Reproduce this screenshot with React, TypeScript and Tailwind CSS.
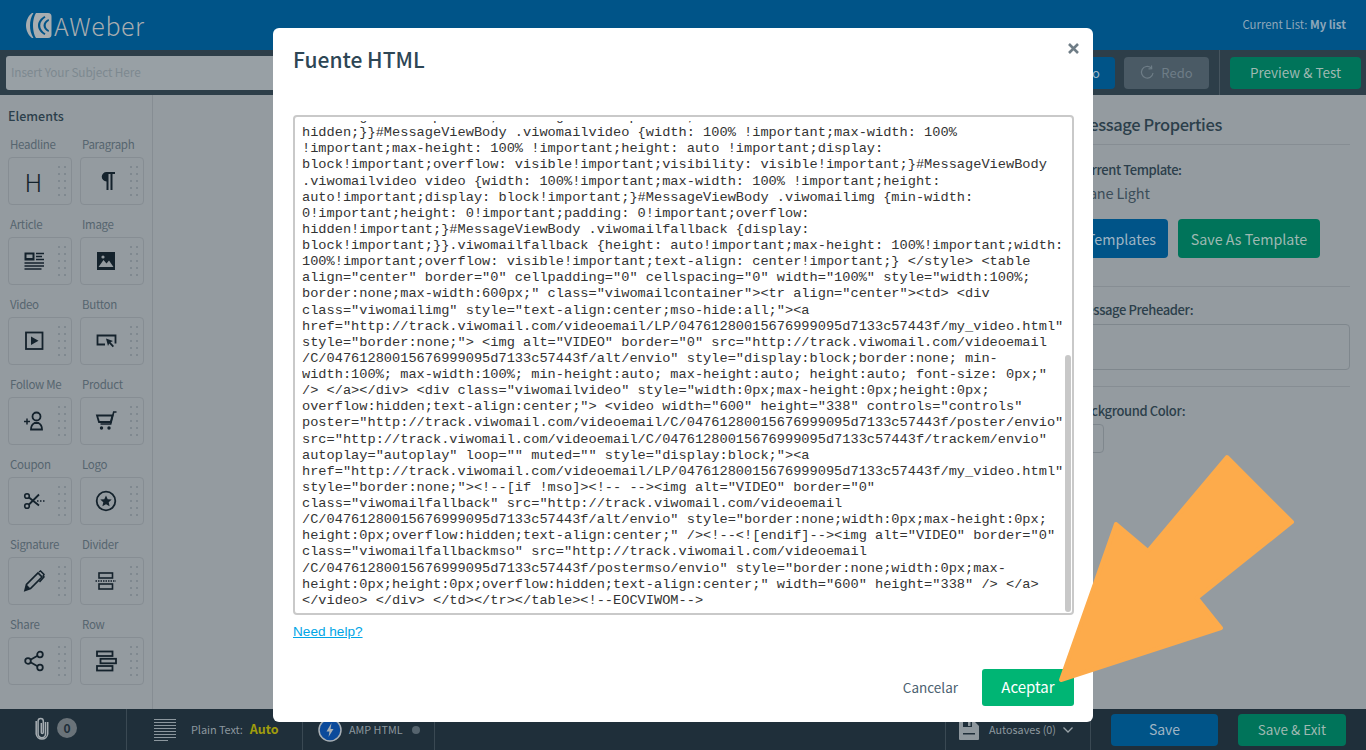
import React from 'react'

const ui = '"Noto Sans CJK SC", "Source Sans Pro", "Noto Sans", sans-serif'

const sourceLines = [
  'min-height: 0!important;max-height: 0!important;overflow:',
  'hidden;}}#MessageViewBody .viwomailvideo {width: 100% !important;max-width: 100%',
  '!important;max-height: 100% !important;height: auto !important;display:',
  'block!important;overflow: visible!important;visibility: visible!important;}#MessageViewBody',
  '.viwomailvideo video {width: 100%!important;max-width: 100% !important;height:',
  'auto!important;display: block!important;}#MessageViewBody .viwomailimg {min-width:',
  '0!important;height: 0!important;padding: 0!important;overflow:',
  'hidden!important;}#MessageViewBody .viwomailfallback {display:',
  'block!important;}}.viwomailfallback {height: auto!important;max-height: 100%!important;width:',
  '100%!important;overflow: visible!important;text-align: center!important;} </style> <table',
  'align="center" border="0" cellpadding="0" cellspacing="0" width="100%" style="width:100%;',
  'border:none;max-width:600px;" class="viwomailcontainer"><tr align="center"><td> <div',
  'class="viwomailimg" style="text-align:center;mso-hide:all;"><a',
  'href="http://track.viwomail.com/videoemail/LP/04761280015676999095d7133c57443f/my_video.html"',
  'style="border:none;"> <img alt="VIDEO" border="0" src="http://track.viwomail.com/videoemail',
  '/C/04761280015676999095d7133c57443f/alt/envio" style="display:block;border:none; min-',
  'width:100%; max-width:100%; min-height:auto; max-height:auto; height:auto; font-size: 0px;"',
  '/> </a></div> <div class="viwomailvideo" style="width:0px;max-height:0px;height:0px;',
  'overflow:hidden;text-align:center;"> <video width="600" height="338" controls="controls"',
  'poster="http://track.viwomail.com/videoemail/C/04761280015676999095d7133c57443f/poster/envio"',
  'src="http://track.viwomail.com/videoemail/C/04761280015676999095d7133c57443f/trackem/envio"',
  'autoplay="autoplay" loop="" muted="" style="display:block;"><a',
  'href="http://track.viwomail.com/videoemail/LP/04761280015676999095d7133c57443f/my_video.html"',
  'style="border:none;"><!--[if !mso]><!-- --><img alt="VIDEO" border="0"',
  'class="viwomailfallback" src="http://track.viwomail.com/videoemail',
  '/C/04761280015676999095d7133c57443f/alt/envio" style="border:none;width:0px;max-height:0px;',
  'height:0px;overflow:hidden;text-align:center;" /><!--<![endif]--><img alt="VIDEO" border="0"',
  'class="viwomailfallbackmso" src="http://track.viwomail.com/videoemail',
  '/C/04761280015676999095d7133c57443f/postermso/envio" style="border:none;width:0px;max-',
  'height:0px;height:0px;overflow:hidden;text-align:center;" width="600" height="338" /> </a>',
  '</video> </div> </td></tr></table><!--EOCVIWOM-->',
]

const Icon = ({ children }: { children: React.ReactNode }) => (
  <svg width="24" height="24" viewBox="0 0 24 24" fill="none" stroke="#14222c" strokeWidth="1.6">
    {children}
  </svg>
)

const elements: { label: string; icon: React.ReactNode }[] = [
  { label: 'Headline', icon: <span className="text-[25px] leading-none font-light text-[#14222c]">H</span> },
  {
    label: 'Paragraph',
    icon: (
      <Icon>
        <path d="M10 3h11v2h-2.500v16h-2V5h-2v16h-2v-8.500a4.750 4.750 0 0 1 0-9.500z" fill="#14222c" stroke="none" />
      </Icon>
    ),
  },
  {
    label: 'Article',
    icon: (
      <Icon>
        <rect x="2.5" y="3.5" width="10" height="8" fill="#14222c" stroke="none" />
        <rect x="4.5" y="5.5" width="6" height="3.5" fill="#949ba0" stroke="none" />
        <path d="M14 4.500h8M14 7.500h6M14 10.500h8M2.500 14h19.500M2.500 17h19.500M2.500 20h17" strokeWidth="1.400" />
      </Icon>
    ),
  },
  {
    label: 'Image',
    icon: (
      <Icon>
        <rect x="3" y="3" width="18" height="18" fill="#14222c" stroke="none" />
        <circle cx="9" cy="8" r="1.600" fill="#949ba0" stroke="none" />
        <path d="M4.500 18 9.500 11l3 3.500 2.500-3 4.500 6.500z" fill="#949ba0" stroke="none" />
      </Icon>
    ),
  },
  {
    label: 'Video',
    icon: (
      <Icon>
        <rect x="4" y="3.500" width="16.500" height="16.500" strokeWidth="1.800" />
        <path d="M9 7.500l7.500 4.200L9 16z" fill="#14222c" stroke="none" />
      </Icon>
    ),
  },
  {
    label: 'Button',
    icon: (
      <Icon>
        <path d="M11 15.500H3.500v-9h18v8" strokeWidth="1.800" />
        <path d="M12 9.500l7 2.500-2.500 1.300 3.500 3.700-1.300 1.200-3.500-3.700-1.200 2.500z" fill="#14222c" stroke="none" />
      </Icon>
    ),
  },
  {
    label: 'Follow Me',
    icon: (
      <Icon>
        <circle cx="14.500" cy="7.500" r="4" strokeWidth="1.800" />
        <path d="M9 20.500c0-2.500.5-5 3.500-6.500h4c3 1.500 3.500 4 3.500 6.500z" strokeWidth="1.800" />
        <path d="M2 12.500h6M5 9.500v6" strokeWidth="1.500" />
      </Icon>
    ),
  },
  {
    label: 'Product',
    icon: (
      <Icon>
        <path d="M22.500 3h-2.800l-3 12H6.500" strokeWidth="1.600" />
        <path d="M3 6.500h15.500l-1.800 6.500H5z" strokeWidth="1.800" />
        <circle cx="7.500" cy="19" r="1.700" fill="#14222c" stroke="none" />
        <circle cx="15" cy="19" r="1.700" fill="#14222c" stroke="none" />
      </Icon>
    ),
  },
  {
    label: 'Coupon',
    icon: (
      <Icon>
        <circle cx="5" cy="7" r="2.300" strokeWidth="1.600" />
        <circle cx="5" cy="17" r="2.300" strokeWidth="1.600" />
        <path d="M7 8.500L17 16.500M7 15.500L17 5.500" strokeWidth="1.800" />
        <path d="M15 12h8" strokeWidth="1.500" strokeDasharray="1.500 1.500" />
      </Icon>
    ),
  },
  {
    label: 'Logo',
    icon: (
      <Icon>
        <circle cx="12" cy="12" r="9.300" strokeWidth="1.800" />
        <path d="M12 6.500l1.700 3.700 4 .4-3 2.700.9 4-3.600-2.100-3.600 2.100.9-4-3-2.700 4-.4z" fill="#14222c" stroke="none" />
      </Icon>
    ),
  },
  {
    label: 'Signature',
    icon: (
      <Icon>
        <path d="M3 21.500l1.500-6L16 4l4 4L8.500 19.500z" strokeWidth="1.700" />
        <path d="M3 21.500l1.500-6 4 4z" fill="#14222c" stroke="none" />
        <path d="M17 3l1.500-1 3.500 3.500-1 2M21 6l1 2-4.500 5" strokeWidth="1.500" />
      </Icon>
    ),
  },
  {
    label: 'Divider',
    icon: (
      <Icon>
        <rect x="5" y="4" width="13.500" height="5" strokeWidth="1.600" />
        <rect x="5" y="15" width="13.500" height="5" strokeWidth="1.600" />
        <path d="M1.500 12h20.500" strokeWidth="1.400" strokeDasharray="1.500 1" />
      </Icon>
    ),
  },
  {
    label: 'Share',
    icon: (
      <Icon>
        <circle cx="6" cy="12" r="2.800" strokeWidth="1.800" />
        <circle cx="18" cy="5.500" r="2.800" strokeWidth="1.800" />
        <circle cx="18" cy="18.500" r="2.800" strokeWidth="1.800" />
        <path d="M8.500 10.700l7-3.900M8.500 13.300l7 3.900" strokeWidth="1.800" />
      </Icon>
    ),
  },
  {
    label: 'Row',
    icon: (
      <Icon>
        <rect x="3" y="2.500" width="15.500" height="4.500" strokeWidth="1.800" />
        <rect x="6.500" y="9.800" width="15.500" height="4.500" strokeWidth="1.800" />
        <rect x="3" y="17" width="15.500" height="4.500" strokeWidth="1.800" />
      </Icon>
    ),
  },
]

const Grip = () => (
  <div className="grid grid-cols-2 gap-x-[4px] gap-y-[5px]">
    {Array.from({ length: 10 }).map((_, i) => (
      <span key={i} className="w-[2px] h-[2px] bg-[#7f888f]" />
    ))}
  </div>
)

const Sidebar = () => (
  <aside className="w-[153px] shrink-0 border-r border-[#868d93] px-2 pt-[11px]">
    <h3 className="text-[12.500px] leading-5 font-medium text-[#2c3f4b]">Elements</h3>
    <div className="grid grid-cols-[64px_64px] gap-x-2 gap-y-[11px] mt-[10px]">
      {elements.map((el) => (
        <div key={el.label}>
          <div className="text-[11.500px] tracking-[-0.3px] leading-4 pl-[2px] mb-[5px] text-[#56656f]">{el.label}</div>
          <div className="h-12 rounded-[4px] border border-[#868d93] flex items-center">
            <div className="w-[49px] flex justify-center items-center">{el.icon}</div>
            <Grip />
          </div>
        </div>
      ))}
    </div>
  </aside>
)

const PropertiesPanel = () => (
  <section className="w-[306px] shrink-0 px-4 text-[#2c3f4b]">
    <h2 className="text-[16.500px] tracking-[-0.4px] leading-6 font-medium mt-[17px] whitespace-nowrap">Message Properties</h2>
    <div className="border-t border-[#868d93] mt-[8px]" />
    <div className="text-[13px] tracking-[-0.4px] leading-5 font-medium mt-[15px]">Current Template:</div>
    <div className="text-[14.500px] tracking-[-0.2px] leading-6 mt-[1px] text-[#3b4d59]">Plane Light</div>
    <div className="flex gap-[10px] mt-[14px]">
      <button className="w-[92px] h-[39px] rounded-[4px] bg-[#005488] text-[14.300px] text-right pr-3 text-[#9fb4c4] overflow-hidden whitespace-nowrap">
        Templates
      </button>
      <button className="w-[142px] h-[39px] rounded-[4px] bg-[#00745a] text-[14.300px] text-[#9fb9b2]">Save As Template</button>
    </div>
    <div className="border-t border-[#868d93] mt-[28px]" />
    <div className="text-[13px] tracking-[-0.4px] leading-5 font-medium mt-[13px]">Message Preheader:</div>
    <div className="h-[46px] rounded-[4px] border border-[#7f878d] mt-[4px]" />
    <div className="border-t border-[#868d93] mt-[16px]" />
    <div className="text-[13px] tracking-[-0.4px] leading-5 font-medium mt-[14px]">Background Color:</div>
    <div className="w-[28px] h-[29px] rounded-[4px] border border-[#7f878d] mt-[3px]" />
  </section>
)

const FooterBar = () => (
  <footer className="h-[41px] shrink-0 bg-[#1f2f3a] flex items-stretch text-[#8c979e]">
    <div className="w-[127px] border-r border-[#3a4953] flex items-center pl-[35px] pb-[3px] gap-2">
      <svg width="14" height="24" viewBox="0 0 14 24" fill="none" stroke="#a6adb2" strokeWidth="1.500">
        <path d="M10.500 6v12a3.700 3.700 0 0 1-7.400 0V5a2.600 2.600 0 0 1 5.200 0v11.500a1 1 0 0 1-2 0V7" />
        <path d="M12.700 6v12a5.800 5.800 0 0 1-11.500 0V5" />
      </svg>
      <span className="w-5 h-5 rounded-full bg-[#6a7379] text-[12px] font-bold text-[#1f2f3a] flex items-center justify-center">0</span>
    </div>
    <div className="w-[176px] border-r border-[#3a4953] flex items-center pl-[27px]">
      <svg width="22" height="22" viewBox="0 0 22 22" stroke="#8c979e" strokeWidth="1">
        <path d="M0 .5h22M0 3.500h22M0 6.500h22M0 9.500h22M0 12.500h22M0 15.500h22M0 18.500h22M0 21.500h14" />
      </svg>
      <span className="ml-[15px] text-[11px] tracking-[-0.1px]">Plain Text:</span>
      <span className="ml-[7px] text-[12.500px] font-bold text-[#a09c0c]">Auto</span>
    </div>
    <div className="w-[132px] border-r border-[#3a4953] flex items-center pl-[15px]">
      <svg width="24" height="24" viewBox="0 0 24 24">
        <circle cx="12" cy="12" r="11" fill="#0b4a9b" stroke="#a9b0b5" strokeWidth="1.500" />
        <path d="M13.500 5l-5 8.500h3L10.500 19l5-8h-3z" fill="#a9b0b5" />
      </svg>
      <span className="ml-[7px] text-[10.800px] whitespace-nowrap">AMP HTML</span>
      <span className="ml-[9px] w-2 h-2 rounded-full bg-[#56646e]" />
    </div>
    <div className="flex-1 border-r border-[#3a4953]" />
    <div className="w-[145px] border-r border-[#3a4953] flex items-center pl-[13px]">
      <svg width="20" height="20" viewBox="0 0 20 20">
        <path d="M0 2a1 1 0 0 1 1-1h14l5 5v13a1 1 0 0 1-1 1H1a1 1 0 0 1-1-1z" fill="#8e979d" />
        <rect x="4" y="1" width="9" height="6" fill="#1f2f3a" />
        <rect x="9" y="2" width="2.500" height="4" fill="#8e979d" />
        <rect x="4" y="13" width="12" height="1.500" fill="#1f2f3a" />
      </svg>
      <span className="ml-[10px] text-[10.800px] whitespace-nowrap">Autosaves (0)</span>
      <svg className="ml-[7px]" width="10" height="6" viewBox="0 0 10 6" fill="none" stroke="#9aa3a8" strokeWidth="1.300">
        <path d="M.5.500 5 5 9.500.500" />
      </svg>
    </div>
    <div className="flex items-center pl-[20px] pr-[20px] gap-5">
      <button className="w-[107px] h-8 rounded-[4px] bg-[#005488] text-[14px] text-[#9fb4c4]">Save</button>
      <button className="w-[108px] h-8 rounded-[4px] bg-[#00745a] text-[13.500px] text-[#9fb9b2]">Save & Exit</button>
    </div>
  </footer>
)

const SourceModal = () => (
  <div className="absolute inset-0 flex justify-center items-start pt-[28px]">
    <div className="w-[820px] h-[694px] bg-white rounded-[6px] pl-5 pr-[19px] flex flex-col">
      <div className="flex justify-between items-start">
        <h1 className="text-[21px] leading-8 font-medium text-[#2d4655] mt-[15px]">Fuente HTML</h1>
        <svg className="mt-[15px] -mr-[5px]" width="11" height="11" viewBox="0 0 11 11" stroke="#6f7d86" strokeWidth="2.600">
          <path d="M1 1l9 9M10 1l-9 9" />
        </svg>
      </div>
      <div className="relative mt-[40px] h-[500px] border-2 border-[#c9c9c9] rounded-[4px] pt-[4px] pb-[3px] pl-[7px]">
        <div className="h-full overflow-hidden font-['Liberation_Mono',monospace] text-[13.65px] leading-[16.13px] text-[#333] whitespace-pre">
          <div className="-mt-[12px]">
            {sourceLines.map((line, i) => (
              <div key={i}>{line}</div>
            ))}
          </div>
        </div>
        <div className="absolute right-[1px] top-[238px] bottom-[1px] w-[6px] rounded-full bg-[#c8c8c8]" />
      </div>
      <a href="#" className="mt-[7px] font-['Liberation_Sans',sans-serif] text-[13.600px] leading-5 underline text-[#00a5e6] self-start">
        Need help?
      </a>
      <div className="flex justify-end items-center mt-auto mb-4 gap-6">
        <button className="text-[13.500px] text-[#4b6170]">Cancelar</button>
        <button className="w-[92px] h-[37px] rounded-[3px] bg-[#00b574] text-[15px] text-white">Aceptar</button>
      </div>
    </div>
  </div>
)

export default function App() {
  return (
    <div className="relative h-screen w-full overflow-hidden flex flex-col bg-[#949ba0]" style={{ fontFamily: ui }}>
      <header className="h-[50px] shrink-0 bg-[#005488] flex items-center justify-between pl-[25px] pr-[20px]">
        <div className="flex items-center gap-[2px]">
          <svg width="27" height="25" viewBox="0 0 27 25" fill="#a8adb0">
            <path d="M7 0C3 3 1 8 1 12.500S3 22 7 25h1.500C6 21 5 17 5 12.500S6 4 8.500 0z" />
            <path
              fillRule="evenodd"
              d="M11 0h12c2.500 0 3.500 1.500 3.500 3.500v18c0 2-1 3.500-3.500 3.500H11c-1.500-2-3-7-3-12.500S9.500 2 11 0zM19.500 3c-4 2.500-6.500 5.500-6.500 9.500s2.500 7 6.500 9.500l1-1.500c-3-2-5.300-4.500-5.300-8s2.300-6 5.300-8zM23.500 6c-3 1.500-5 3.500-5 6.500s2 5 5 6.500l.5-1.800c-2-1-3.300-2.700-3.300-4.700s1.300-3.700 3.300-4.700z"
            />
          </svg>
          <span className="text-[25px] tracking-[0.6px] font-light leading-none text-[#a8adb0]">AWeber</span>
        </div>
        <div className="text-[11.400px] text-[#8ea7ba]">
          Current List: <span className="font-bold">My list</span>
        </div>
      </header>

      <div className="h-[45px] shrink-0 bg-[#2d3e49] flex items-center pl-[6px] pr-[5px]">
        <input
          placeholder="Insert Your Subject Here"
          className="flex-1 min-w-0 h-[34px] rounded-[3px] bg-[#98a0a5] pl-[5px] pb-[2px] text-[11.800px] tracking-[-0.1px] placeholder:text-[#7d8990] outline-none"
        />
        <button className="ml-3 w-[85px] h-8 rounded-[4px] bg-[#005488] text-[13px] text-right pr-[15px] text-[#9fb4c4]">Undo</button>
        <button className="ml-[9px] w-[85px] h-8 rounded-[4px] bg-[#4a5a65] text-[13px] text-[#6e7d87] flex items-center justify-center gap-[6px]">
          <svg width="15" height="15" viewBox="0 0 15 15" fill="none" stroke="#6e7d87" strokeWidth="1.200">
            <path d="M13 8a5.800 5.800 0 1 1-2-5.200M11.500 .500l.2 3.200-3.200.2" />
          </svg>
          Redo
        </button>
        <div className="self-stretch border-l border-[#46555f] ml-[10px] mr-[10px]" />
        <button className="w-[131px] h-8 rounded-[4px] bg-[#00745a] text-[13.500px] text-[#9fb9b2]">Preview & Test</button>
      </div>

      <main className="flex-1 min-h-0 flex">
        <Sidebar />
        <div className="flex-1" />
        <PropertiesPanel />
      </main>

      <FooterBar />
      <SourceModal />

      <svg className="absolute top-[450px] left-[1050px] pointer-events-none" width="250" height="240" viewBox="1050 450 250 240">
        <path
          d="M1061 680 1116 524 1148 551 1227 457 1292 522 1197 598 1221 628z"
          fill="#fdab4b"
          stroke="#fdab4b"
          strokeWidth="4"
          strokeLinejoin="round"
        />
      </svg>
    </div>
  )
}
